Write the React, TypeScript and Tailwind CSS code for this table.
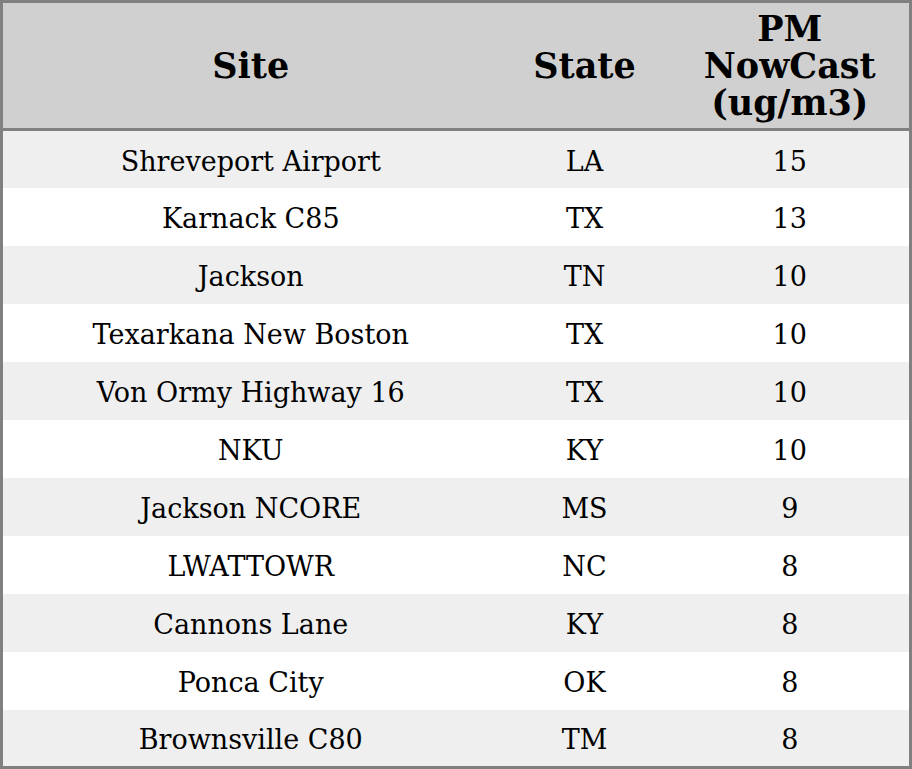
const rows: [string, string, string][] = [
  ["Shreveport Airport", "LA", "15"],
  ["Karnack C85", "TX", "13"],
  ["Jackson", "TN", "10"],
  ["Texarkana New Boston", "TX", "10"],
  ["Von Ormy Highway 16", "TX", "10"],
  ["NKU", "KY", "10"],
  ["Jackson NCORE", "MS", "9"],
  ["LWATTOWR", "NC", "8"],
  ["Cannons Lane", "KY", "8"],
  ["Ponca City", "OK", "8"],
  ["Brownsville C80", "TM", "8"],
];

export default function App() {
  return (
    <div className="w-[912px] h-[769px] bg-white font-['DejaVu_Serif',serif] text-black">
      <table className="w-full h-full border-[3px] border-[#808080] border-collapse table-fixed">
        <colgroup>
          <col className="w-[497px]" />
          <col className="w-[172px]" />
          <col />
        </colgroup>
        <thead>
          <tr className="h-[128px] bg-[#d0d0d0] border-b-[3px] border-[#808080]">
            <th className="text-[35px] leading-[37px] font-bold text-center">Site</th>
            <th className="text-[35px] leading-[37px] font-bold text-center">State</th>
            <th className="text-[35px] leading-[37px] font-bold text-center">
              PM
              <br />
              NowCast
              <br />
              (ug/m3)
            </th>
          </tr>
        </thead>
        <tbody>
          {rows.map(([site, state, pm], i) => (
            <tr key={i} className={`h-[58px] ${i % 2 === 0 ? "bg-[#efefef]" : "bg-white"}`}>
              <td className="text-center text-[27px] pt-[5px]">{site}</td>
              <td className="text-center text-[27px] pt-[5px]">{state}</td>
              <td className="text-center text-[27px] pt-[5px]">{pm}</td>
            </tr>
          ))}
        </tbody>
      </table>
    </div>
  );
}
